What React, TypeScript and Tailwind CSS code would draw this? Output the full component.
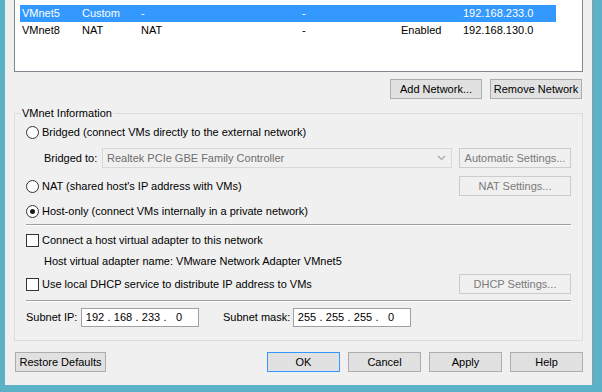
import React from "react";

function Radio({ checked }: { checked?: boolean }) {
  return (
    <span className="w-[13px] h-[13px] rounded-full border border-[#333333] bg-white flex items-center justify-center shrink-0">
      {checked && <span className="w-[5px] h-[5px] rounded-full bg-[#1a1a1a]" />}
    </span>
  );
}

function Check() {
  return <span className="w-[13px] h-[13px] border border-[#333333] bg-white shrink-0" />;
}

function Btn({
  children,
  className = "",
  disabled,
  def,
}: {
  children: React.ReactNode;
  className?: string;
  disabled?: boolean;
  def?: boolean;
}) {
  const cls = disabled
    ? "border-[#cccccc] bg-[#f0f0f0] text-[#7a7a7a]"
    : def
    ? "border-[#3399ff] bg-[#e1e1e1] text-black"
    : "border-[#adadad] bg-[#e1e1e1] text-black";
  return (
    <div className={`h-[20px] border flex items-center justify-center shrink-0 whitespace-nowrap ${cls} ${className}`}>
      {children}
    </div>
  );
}

const rows = [
  ["VMnet4", "Custom", "-", "-", "", "192.168.134.0"],
  ["VMnet5", "Custom", "-", "-", "", "192.168.233.0"],
  ["VMnet8", "NAT", "NAT", "-", "Enabled", "192.168.130.0"],
];

function Row({ r, sel }: { r: string[]; sel?: boolean }) {
  return (
    <div
      className={`h-[17px] w-[536px] flex items-center pl-[2px] whitespace-nowrap ${
        sel ? "bg-[#3399ff] text-white" : "text-black"
      }`}
    >
      <span className="w-[60px]">{r[0]}</span>
      <span className="w-[59px]">{r[1]}</span>
      <span className="w-[161px]">{r[2]}</span>
      <span className="w-[99px]">{r[3]}</span>
      <span className="w-[62px]">{r[4]}</span>
      <span>{r[5]}</span>
    </div>
  );
}

function IpBox({ parts, className = "" }: { parts: string[]; className?: string }) {
  return (
    <div className={`h-[19px] w-[118px] border border-[#a0a0a0] bg-white flex items-center pl-[2px] ${className}`}>
      {parts.map((p, i) => (
        <React.Fragment key={i}>
          <span className="w-[22px] text-center">{p}</span>
          {i < 3 && <span className="w-[6px] text-center">.</span>}
        </React.Fragment>
      ))}
    </div>
  );
}

function Sep() {
  return <div className="border-t border-[#a0a0a0] border-b border-b-white" />;
}

export default function App() {
  return (
    <div className="w-[602px] h-[392px] bg-[#5bb1c6] overflow-hidden flex font-['Liberation_Sans',Arial,sans-serif] text-[11px] leading-none text-black whitespace-nowrap">
      <div className="ml-[5px] w-[588px] h-[385px] bg-[#f0f0f0] pl-[9px] pr-[9px] flex flex-col border-r border-[#8a9aa0]">
        {/* list */}
        <div className="-mt-[14px] h-[86px] border border-[#828790] bg-white pt-[1px] pl-[5px] overflow-hidden shrink-0">
          <Row r={rows[0]} />
          <Row r={rows[1]} sel />
          <Row r={rows[2]} />
        </div>

        {/* network buttons */}
        <div className="mt-[7px] flex justify-end gap-[8px] pr-[1px]">
          <Btn className="w-[92px]">Add Network...</Btn>
          <Btn className="w-[92px]">Remove Network</Btn>
        </div>

        {/* group */}
        <div className="relative mt-[14px] border border-[#dcdcdc] pl-[11px] pr-[11px] pb-[13px] shrink-0">
          <span className="absolute -top-[6px] left-[6px] px-[1px] bg-[#f0f0f0]">VMnet Information</span>

          <div className="mt-[9px] h-[18px] flex items-center gap-[3px]">
            <Radio />
            <span>Bridged (connect VMs directly to the external network)</span>
          </div>

          <div className="mt-[7px] h-[20px] flex items-center">
            <span className="w-[76px] pl-[18px]">Bridged to:</span>
            <div className="w-[350px] h-[20px] border border-[#d9d9d9] bg-[#f0f0f0] flex items-center pl-[4px] pr-[5px] text-[#6d6d6d]">
              <span className="flex-1">Realtek PCIe GBE Family Controller</span>
              <svg width="9" height="6" viewBox="0 0 9 6">
                <polyline points="1,1 4.5,4.5 8,1" fill="none" stroke="#a8a8a8" strokeWidth="1.2" />
              </svg>
            </div>
            <Btn disabled className="ml-[7px] w-[112px]">Automatic Settings...</Btn>
          </div>

          <div className="mt-[8px] h-[20px] flex items-center gap-[3px]">
            <Radio />
            <span>NAT (shared host's IP address with VMs)</span>
            <Btn disabled className="ml-auto w-[112px]">NAT Settings...</Btn>
          </div>

          <div className="mt-[6px] h-[18px] flex items-center gap-[3px]">
            <Radio checked />
            <span>Host-only (connect VMs internally in a private network)</span>
          </div>

          <div className="mt-[4px]">
            <Sep />
          </div>

          <div className="mt-[5px] h-[18px] flex items-center gap-[3px]">
            <Check />
            <span>Connect a host virtual adapter to this network</span>
          </div>

          <div className="mt-[3px] h-[18px] flex items-center pl-[18px]">
            Host virtual adapter name: VMware Network Adapter VMnet5
          </div>

          <div className="mt-[4px] h-[20px] flex items-center gap-[3px]">
            <Check />
            <span>Use local DHCP service to distribute IP address to VMs</span>
            <Btn disabled className="ml-auto w-[112px]">DHCP Settings...</Btn>
          </div>

          <div className="mt-[6px]">
            <Sep />
          </div>

          <div className="mt-[6px] h-[19px] flex items-center">
            <span className="w-[55px]">Subnet IP:</span>
            <IpBox parts={["192", "168", "233", "0"]} />
            <span className="ml-[24px] w-[70px]">Subnet mask:</span>
            <IpBox parts={["255", "255", "255", "0"]} />
          </div>
        </div>

        {/* bottom buttons */}
        <div className="mt-[11px] flex items-center pl-[1px]">
          <Btn className="w-[91px]">Restore Defaults</Btn>
          <div className="ml-auto flex gap-[8px]">
            <Btn def className="w-[73px]">OK</Btn>
            <Btn className="w-[73px]">Cancel</Btn>
            <Btn className="w-[73px]">Apply</Btn>
            <Btn className="w-[73px]">Help</Btn>
          </div>
        </div>
      </div>
    </div>
  );
}
